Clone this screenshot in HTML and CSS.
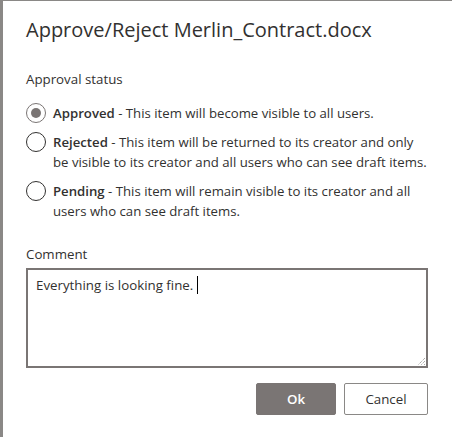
FILE: index.html
```html
<!DOCTYPE html>
<html>
<head>
<meta charset="utf-8">
<link rel="stylesheet" href="styles.css">
</head>
<body>
<div class="dialog">
  <h1 class="title">Approve/Reject Merlin_Contract.docx</h1>
  <div class="label status-label">Approval status</div>
  <div class="options">
    <div class="option">
      <span class="radio checked"><span class="dot"></span></span>
      <span class="opt-text"><b>Approved</b> - This item will become visible to all users.</span>
    </div>
    <div class="option">
      <span class="radio"></span>
      <span class="opt-text"><b>Rejected</b> - This item will be returned to its creator and only<br>be visible to its creator and all users who can see draft items.</span>
    </div>
    <div class="option">
      <span class="radio"></span>
      <span class="opt-text"><b>Pending</b> - This item will remain visible to its creator and all<br>users who can see draft items.</span>
    </div>
  </div>
  <div class="label comment-label">Comment</div>
  <div class="textarea">
    <span class="typed">Everything is looking fine.</span><span class="caret"></span>
    <svg class="grip" width="10" height="10" viewBox="0 0 10 10">
      <path d="M9 2 L2 9 M9 5 L5 9 M9 8 L8 9" stroke="#8a8886" stroke-width="1" stroke-dasharray="1 1" fill="none"/>
    </svg>
  </div>
  <div class="actions">
    <button class="btn primary">Ok</button>
    <button class="btn">Cancel</button>
  </div>
</div>
</body>
</html>
```
FILE: styles.css
```css
html, body {
  margin: 0;
  padding: 0;
}
body {
  width: 452px;
  height: 437px;
  background: #8a8886;
  overflow: hidden;
  font-family: "Open Sans", "Noto Sans", sans-serif;
  color: #323130;
}
.dialog {
  margin-left: 3px;
  margin-top: 1px;
  height: 436px;
  background: #ffffff;
  padding: 0 24px 0 23px;
  box-sizing: border-box;
  display: flex;
  flex-direction: column;
}
.title {
  margin: 15px 0 0 0;
  font-size: 20px;
  font-weight: 400;
  line-height: 28px;
  color: #323130;
}
.label {
  font-size: 13.3px;
  font-weight: 400;
  line-height: 20px;
}
.status-label {
  margin-top: 25px;
}
.options {
  margin-top: 14px;
  margin-right: -10px;
  display: flex;
  flex-direction: column;
  gap: 9px;
}
.option {
  display: flex;
  align-items: flex-start;
  gap: 7px;
}
.radio {
  flex: none;
  width: 20px;
  height: 20px;
  box-sizing: border-box;
  border: 1px solid #323130;
  border-radius: 50%;
  display: flex;
  align-items: center;
  justify-content: center;
}
.radio.checked {
  border-color: #7a7574;
}
.dot {
  width: 10px;
  height: 10px;
  border-radius: 50%;
  background: #7a7574;
}
.opt-text {
  font-size: 13.2px;
  line-height: 20px;
  white-space: nowrap;
}
.opt-text b {
  font-weight: 600;
}
.comment-label {
  margin-top: 23px;
}
.textarea {
  position: relative;
  margin-top: 4px;
  height: 100px;
  box-sizing: border-box;
  border: 2px solid #7a7574;
  padding: 5px 8px;
  font-size: 13.3px;
  line-height: 20px;
  display: flex;
  align-items: flex-start;
}
.caret {
  display: inline-block;
  width: 1px;
  height: 18px;
  background: #000;
  margin-left: 4px;
  margin-top: 1px;
}
.grip {
  position: absolute;
  right: 0;
  bottom: 0;
}
.actions {
  margin-top: 15px;
  display: flex;
  justify-content: flex-end;
  gap: 8px;
}
.btn {
  font-family: inherit;
  font-size: 13.3px;
  font-weight: 400;
  height: 32px;
  width: 84px;
  border: 1px solid #8a8886;
  border-radius: 2px;
  background: #ffffff;
  color: #323130;
  padding: 0;
}
.btn.primary {
  width: 80px;
  background: #7a7574;
  border-color: #7a7574;
  color: #ffffff;
  font-weight: 600;
}
```
